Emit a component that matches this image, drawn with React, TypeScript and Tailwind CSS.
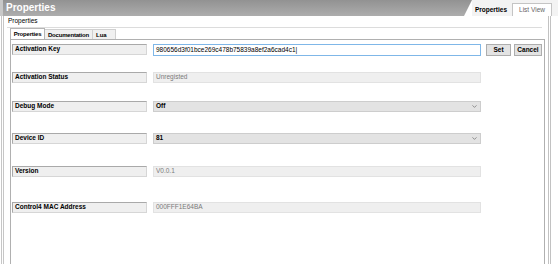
import { ChevronDown } from 'lucide-react';

interface Row {
  label: string;
  value: string;
  kind: 'readonly' | 'select';
  gap: string;
}

const rows: Row[] = [
  { label: 'Activation Status', value: 'Unregisted', kind: 'readonly', gap: 'mt-[16px]' },
  { label: 'Debug Mode', value: 'Off', kind: 'select', gap: 'mt-[18px]' },
  { label: 'Device ID', value: '81', kind: 'select', gap: 'mt-[21px]' },
  { label: 'Version', value: 'V0.0.1', kind: 'readonly', gap: 'mt-[22px]' },
  { label: 'Control4 MAC Address', value: '000FFF1E64BA', kind: 'readonly', gap: 'mt-[25px]' },
];

function Label({ text }: { text: string }) {
  return (
    <div className="w-[135px] h-[11px] shrink-0 bg-[#efefef] border border-[#a9a9a9] border-b-[#d6d6d6] border-r-[#d6d6d6] flex items-center pl-[2px] text-[6.5px] font-bold text-black leading-none">
      {text}
    </div>
  );
}

function Field({ row }: { row: Row }) {
  if (row.kind === 'select') {
    return (
      <div className="ml-[6px] w-[328px] h-[11px] bg-[#e3e3e3] border border-[#cdcdcd] flex items-center justify-between pl-[2px] pr-[2px] text-[6.5px] font-bold text-black leading-none">
        <span>{row.value}</span>
        <ChevronDown size={7} strokeWidth={2} className="text-[#555]" />
      </div>
    );
  }
  return (
    <div className="ml-[6px] w-[328px] h-[11px] bg-[#efefef] border border-[#e2e2e2] flex items-center pl-[2px] text-[6.5px] text-[#7a7a7a] leading-none">
      {row.value}
    </div>
  );
}

export default function App() {
  return (
    <div
      className="w-[558px] h-[264px] bg-white overflow-hidden flex flex-col"
      style={{ fontFamily: '"Liberation Sans", Arial, sans-serif' }}
    >
      {/* Title bar */}
      <div className="h-[16px] flex items-stretch shrink-0 border-l-[3px] border-[#c8c8c8]">
        <div className="flex-1 bg-gradient-to-b from-[#929292] to-[#adadad] flex items-center pl-[3px] text-white font-bold text-[10px] leading-none [clip-path:polygon(0_0,100%_0,calc(100%-8px)_100%,0_100%)]">
          Properties
        </div>
        <div className="w-[86px] bg-[#f3f3f3] flex items-end pr-[3px]">
          <div className="h-[13px] w-[38px] flex items-center justify-center text-[6.5px] font-bold text-black">
            Properties
          </div>
          <div className="h-[13px] w-[40px] ml-[2px] bg-white border border-[#c4c4c4] border-b-0 flex items-center justify-center text-[6.5px] text-[#666]">
            List View
          </div>
        </div>
      </div>

      <div className="flex flex-1 min-h-0">
        {/* left frame lines */}
        <div className="w-[7px] shrink-0 flex">
          <div className="w-[3px] ml-[1px] border-l border-r border-[#c6c6c6]" />
        </div>
        <div className="flex-1 flex flex-col min-w-0">
          <div className="h-[12px] shrink-0 flex items-center pl-[1px] text-[6.5px] text-black leading-none border-b border-[#dcdcdc] mr-[6px]">
            Properties
          </div>
          {/* Tabs */}
          <div className="h-[11px] shrink-0 flex items-end pl-[3px]">
            <div className="h-[11px] w-[35px] bg-white border border-[#b5b5b5] border-b-0 flex items-center justify-center text-[6px] tracking-[-0.2px] font-bold leading-none">
              Properties
            </div>
            <div className="h-[10px] w-[48px] bg-[#f0f0f0] border-t border-r border-[#d0d0d0] flex items-center justify-center text-[6px] tracking-[-0.2px] font-bold leading-none">
              Documentation
            </div>
            <div className="h-[10px] w-[23px] pl-[3px] bg-[#f0f0f0] border-t border-r border-[#d0d0d0] flex items-center text-[6px] font-bold leading-none">
              Lua
            </div>
          </div>
          {/* Panel */}
          <div className="flex-1 ml-[3px] mr-[3px] border-l border-t border-r border-[#b0b0b0] flex flex-col items-start pl-[1px] pt-[4px]">
            <div className="flex items-start">
              <Label text="Activation Key" />
              <div className="ml-[6px] w-[328px] h-[12px] bg-white border border-[#7fb7e8] flex items-center pl-[2px] text-[6.5px] text-black leading-none">
                980656d3f01bce269c478b75839a8ef2a6cad4c1|
              </div>
              <button className="ml-[5px] w-[25px] h-[12px] bg-[#e3e3e3] border border-[#adadad] text-[6.5px] font-bold leading-none">
                Set
              </button>
              <button className="ml-[3px] w-[28px] h-[12px] bg-[#e3e3e3] border border-[#adadad] text-[6.5px] font-bold leading-none">
                Cancel
              </button>
            </div>
            {rows.map((row) => (
              <div key={row.label} className={`flex items-start ${row.gap}`}>
                <Label text={row.label} />
                <Field row={row} />
              </div>
            ))}
          </div>
        </div>
        {/* right frame lines */}
        <div className="w-[10px] shrink-0 flex">
          <div className="w-[3px] border-l border-r border-[#c2c2c2]" />
        </div>
      </div>
    </div>
  );
}
